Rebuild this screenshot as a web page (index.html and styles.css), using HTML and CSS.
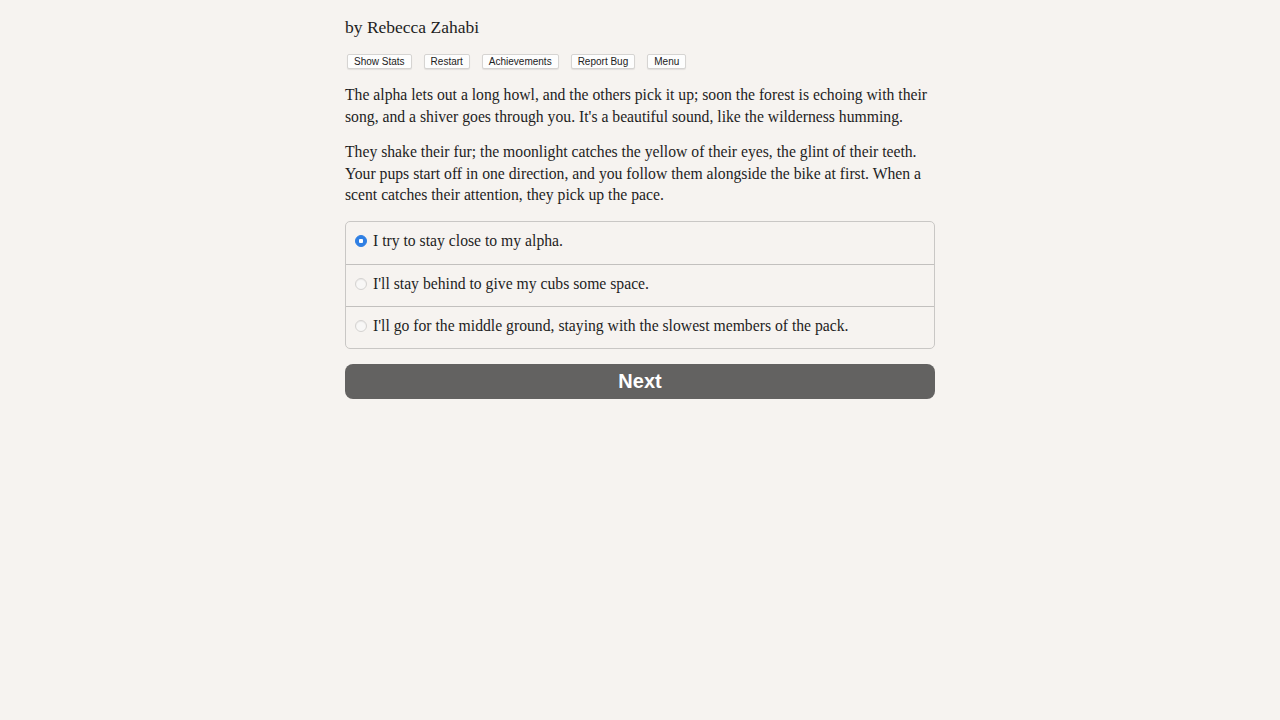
FILE: index.html
```html
<!DOCTYPE html>
<html>
<head>
  <title>Choice of the Wolf</title>
  <link rel="stylesheet" href="styles.css">
</head>
<body>
  <div class="container">
    <p class="author">by Rebecca Zahabi</p>
    <div class="button-row">
      <button class="small-btn">Show Stats</button>
      <button class="small-btn">Restart</button>
      <button class="small-btn">Achievements</button>
      <button class="small-btn">Report Bug</button>
      <button class="small-btn">Menu</button>
    </div>
    <p class="story">The alpha lets out a long howl, and the others pick it up; soon the forest is echoing with their song, and a shiver goes through you. It's a beautiful sound, like the wilderness humming.</p>
    <p class="story">They shake their fur; the moonlight catches the yellow of their eyes, the glint of their teeth. Your pups start off in one direction, and you follow them alongside the bike at first. When a scent catches their attention, they pick up the pace.</p>
    <form class="choices">
      <label class="choice">
        <input type="radio" name="choice" class="radio" checked>
        <span>I try to stay close to my alpha.</span>
      </label>
      <label class="choice">
        <input type="radio" name="choice" class="radio">
        <span>I'll stay behind to give my cubs some space.</span>
      </label>
      <label class="choice">
        <input type="radio" name="choice" class="radio">
        <span>I'll go for the middle ground, staying with the slowest members of the pack.</span>
      </label>
    </form>
    <button class="next-btn">Next</button>
  </div>
</body>
</html>
```

FILE: styles.css
```css
body{
  margin: 0;
  background-color: #f6f3f0;
  font-family: "Liberation Serif", serif;
  color: #1e1e1e;
}

.container{
  width: 590px;
  margin: 0 auto;
  padding-top: 15px;
}

.author{
  margin: 0 0 15px;
  font-size: 17.5px;
  line-height: 24px;
}

.button-row{
  display: flex;
  gap: 12px;
  margin-bottom: 15px;
  padding-left: 2px;
}

.small-btn{
  font-family: "Liberation Sans", Arial, sans-serif;
  font-size: 10px;
  line-height: 13px;
  color: #222;
  background-color: #fdfdfd;
  border: 1px solid #d6d4d2;
  border-radius: 2px;
  padding: 0 6px;
  box-shadow: 0 1px 1px rgba(0, 0, 0, 0.08);
}

.story{
  margin: 0 0 14px;
  font-size: 15.7px;
  line-height: 21.5px;
}

.choices{
  border: 1px solid #c9c7c5;
  border-radius: 5px;
  margin-top: 15px;
  margin-bottom: 15px;
}

.choice{
  box-sizing: border-box;
  display: flex;
  align-items: center;
  height: 42px;
  padding: 0 0 3px 8px;
  font-size: 15.7px;
  border-top: 1px solid #c2c0be;
}

.choice:first-child{
  border-top: none;
}

/* custom radio: faint ring when off, blue disc with white dot when on */
.radio{
  appearance: none;
  width: 12px;
  height: 12px;
  margin: 0 6px 0 1px;
  border-radius: 50%;
  border: 1px solid #d4d2d0;
  background-color: #f8f7f6;
  box-shadow: inset 0 1px 1px rgba(0, 0, 0, 0.06);
}

.radio:checked{
  border-color: #2f7fe3;
  background-color: #2f7fe3;
  background-image: radial-gradient(circle, #fff 0 2px, transparent 2.5px);
  box-shadow: none;
}

.next-btn{
  display: block;
  width: 100%;
  height: 35px;
  border: none;
  border-radius: 8px;
  background-color: #636261;
  color: #fff;
  font-family: "Liberation Sans", Arial, sans-serif;
  font-weight: bold;
  font-size: 20px;
}
```
